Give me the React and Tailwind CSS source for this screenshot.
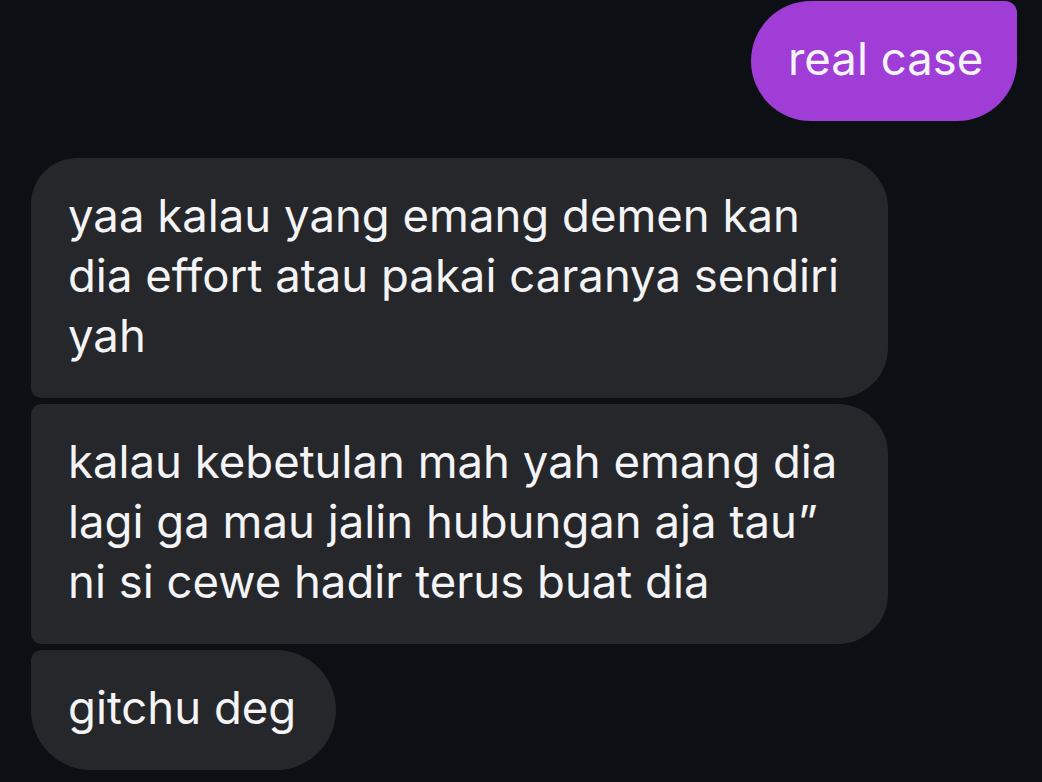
import React from 'react';

const font = { fontFamily: 'Inter, "Noto Sans", sans-serif' };

const Bubble = ({ className, children }) => (
  <div className={`px-[37px] pt-[28px] pb-[32px] text-[45.5px] leading-[60px] text-[#f4f4f6] whitespace-nowrap ${className}`}>
    {children}
  </div>
);

export default function App() {
  return (
    <div className="w-[1042px] h-[782px] bg-[#0c0f13] overflow-hidden pt-px" style={font}>
      <div className="flex justify-end pr-[25px]">
        <Bubble className="bg-[#a03dd6] rounded-[60px] rounded-tr-[12px] w-[266px]">real case</Bubble>
      </div>

      <div className="flex flex-col gap-[6px] pl-[31px] mt-[37px]">
        <Bubble className="bg-[#25272b] w-[857px] rounded-[50px] rounded-tl-[46px] rounded-bl-[10px]">
          yaa kalau yang emang demen kan
          <br />
          dia effort atau pakai caranya sendiri
          <br />
          yah
        </Bubble>
        <Bubble className="bg-[#25272b] w-[857px] rounded-[50px] rounded-tl-[10px] rounded-bl-[10px]">
          kalau kebetulan mah yah emang dia
          <br />
          lagi ga mau jalin hubungan aja tau”
          <br />
          ni si cewe hadir terus buat dia
        </Bubble>
        <Bubble className="bg-[#25272b] w-[305px] rounded-[60px] rounded-tl-[10px]">gitchu deg</Bubble>
      </div>
    </div>
  );
}
